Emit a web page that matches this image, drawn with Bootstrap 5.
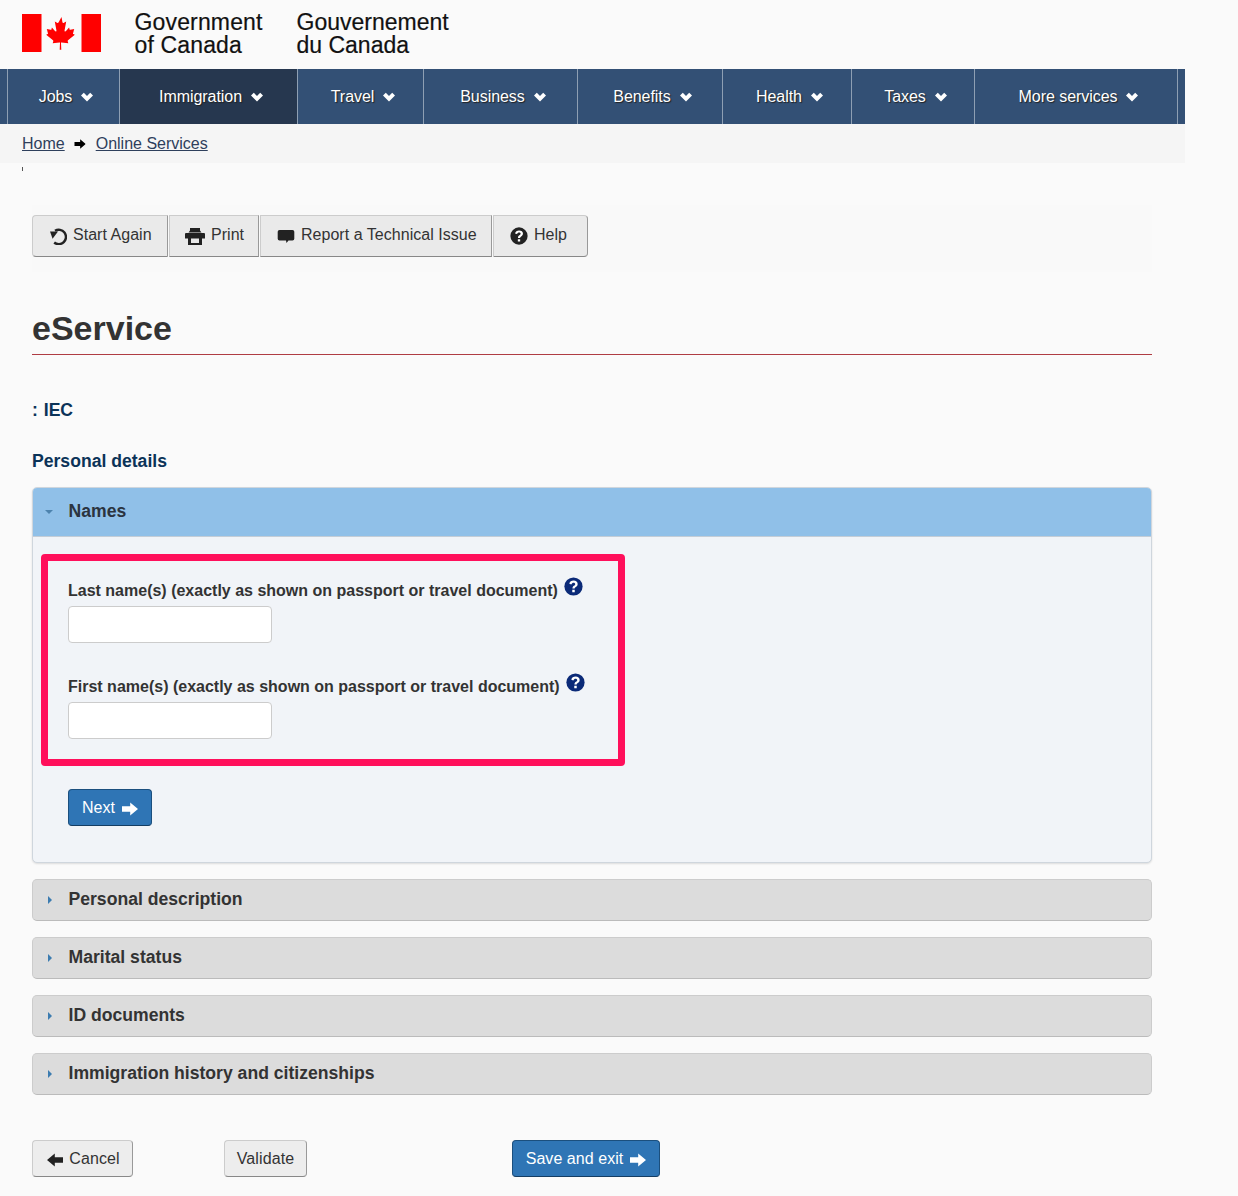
<!DOCTYPE html>
<html lang="en"><head><meta charset="utf-8"><title>eService</title>
<link href="https://cdn.jsdelivr.net/npm/bootstrap@5.3.0/dist/css/bootstrap.min.css" rel="stylesheet">
<style>
html,body{background:#fafafa}
body{font-family:"Liberation Sans",Arial,sans-serif;color:#333;font-size:16px;height:1196px;overflow:hidden}
.gc-head{height:69px;padding:14px 0 0 22px}
.gc-flag{width:79px;height:38px;display:block}
.gc-names{margin-left:33.500px;margin-top:-3px;color:#111;font-size:23px;line-height:23px;gap:33px;-webkit-text-stroke:.2px #111}
.gc-names div{white-space:pre-line;width:129px}
.gc-names .en-name{letter-spacing:.15px}
.gc-nav{width:1185px;height:55px;background:#335075;padding-left:7px}
.gc-nav a{display:flex;align-items:center;justify-content:center;gap:9px;padding-left:5px;color:#fff;text-decoration:none;height:55px;border-left:1px solid #8e9fb3;font-size:16px;letter-spacing:-.05px;text-shadow:1px 1px 1px #222}
.gc-nav a.on{background:#26374f}
.gc-nav .endcap{border-left:1px solid #8e9fb3;width:8px;flex:none}
.gc-nav svg{width:12px;height:12px;fill:#fff}
.gc-crumb{width:1185px;height:39px;background:#f5f5f5;padding-left:22px;font-size:16px;gap:9px}
.gc-crumb a{color:#2e3f5c}
.gc-crumb svg{margin-right:1px}
.tick{margin:4px 0 0 22px;width:1px;height:4px;background:#555}
.page-wrap{width:1120px;margin-left:32px}
.tool-strip{background:#f9f9f9;margin-top:34px;height:67px;padding-top:10px;gap:1px}
.tool-btn{height:42px;display:flex;align-items:center;justify-content:flex-start;gap:6px;background:#eaeaea;border:1px solid #ccc;border-bottom-color:#888;border-right-color:#999;color:#333;font-size:16px;padding:0 0 2px 16px;border-radius:0;letter-spacing:.03px;white-space:nowrap}
.tool-btn.first{border-radius:4px 0 0 4px}.tool-btn.last{border-radius:0 4px 4px 0}
.tool-btn svg{width:18px;height:18px;fill:#222;flex:none;position:relative;top:1px}
.tool-btn svg.ico-print{width:20px;height:18px;margin:0 0 0 -1px;top:2px}
.w-start{width:136px}.w-print{width:90px}.w-report{width:232px}.w-help{width:95px}
.svc-title{font-size:34px;font-weight:700;color:#333;margin:0;line-height:38px;padding:37px 0 7px;border-bottom:1px solid #af3c43}
.sub-head{font-size:17.600px;font-weight:700;color:#0b3358;line-height:22px}
.iec-line{margin-top:44px;word-spacing:1px}
.pd-line{margin-top:29px}
.acc-open{margin-top:15px;border:1px solid #cfd6dd;border-radius:5px;background:#f1f4f8;height:376px;box-shadow:0 1px 2px rgba(0,0,0,.12)}
.acc-top{height:49px;padding-bottom:2px;background:#90c0e8;border-radius:4px 4px 0 0;border-bottom:1px solid #c3cdd7;font-size:17.600px;font-weight:700;color:#2b3440}
.acc-closed{margin-top:16px;height:42px;padding-bottom:2px;background:#dcdcdc;border:1px solid #ccc;border-bottom-color:#bbb;border-radius:5px;font-size:17.600px;font-weight:700;color:#333}
.caret-slot{width:35.500px;flex:none;padding-left:12px;display:flex}
.caret-d{width:0;height:0;margin-top:2px;border:4px solid transparent;border-top:4px solid #4d83ae;border-bottom:0}
.caret-r{width:0;height:0;margin:2px 0 0 3px;border:4px solid transparent;border-left:4px solid #3c7cb0;border-right:0}
.hi-box{margin:17px 0 0 8px;width:584px;height:212px;border:7px solid #ff0f5b;border-radius:4px;padding:17px 0 0 20px}
.fld-label{font-size:16px;font-weight:700;color:#333;line-height:22px;gap:6px;height:28px;padding-bottom:2px;white-space:nowrap}
.fld-label svg{width:19px;height:19px;margin-top:-10px;flex:none;fill:#0b2a78}
.fld-input{display:block;width:204px;height:37px;border:1px solid #ccc;border-radius:4px;background:#fff;padding:0 8px;margin-bottom:31px}
.next-btn{margin:23px 0 0 35px;width:84px;height:37px;padding:0;display:flex;align-items:center;justify-content:center;gap:7px;background:#2f75b5;border:1px solid #1b4f7e;border-bottom-color:#143d63;border-radius:4px;color:#fff;font-size:16px}
.next-btn svg,.save-btn svg{width:16px;height:14px;fill:#fff;position:relative;top:1px}
.act-row{margin-top:45px;height:37px}
.plain-btn{height:37px;padding:0;display:flex;align-items:center;justify-content:center;gap:6px;background:#ededed;border:1px solid #ccc;border-bottom-color:#888;border-right-color:#999;border-radius:4px;color:#333;font-size:16px;letter-spacing:.1px}
.plain-btn svg{width:16px;height:14px;fill:#222;position:relative;top:1px}
.w-cancel{width:101px;padding-left:2px}.w-valid{width:83px;margin-left:91px}
.save-btn{height:37px;width:148px;margin-left:205px;padding:0;display:flex;align-items:center;justify-content:center;gap:7px;background:#2f75b5;border:1px solid #1b4f7e;border-bottom-color:#143d63;border-radius:4px;color:#fff;font-size:16px;letter-spacing:.05px}
.n1{width:112px}.n2{width:178px}.n3{width:126px}.n4{width:154px}.n5{width:145px}.n6{width:129px}.n7{width:123px}.n8{width:203px}
</style></head><body>
<svg width="0" height="0" class="d-block position-absolute"><defs>
<symbol id="chev" viewBox="0 0 12 12"><path d="M0 4.500 2.800 1.800 6 5l3.200-3.200L12 4.500 6 10.500z"/></symbol>
<symbol id="arr" viewBox="0 0 16 14"><path d="M0 4.200h8.200V.5L16 7l-7.800 6.500V9.800H0z"/></symbol>
<symbol id="arl" viewBox="0 0 16 14"><path d="M16 4.200H7.800V.5L0 7l7.800 6.500V9.800H16z"/></symbol>
<symbol id="qm" viewBox="0 0 20 20"><circle cx="10" cy="10" r="9.600"/><path fill="#fff" d="M7.700 7.900 5.600 7.200C6 5 7.800 3.800 10.100 3.800c2.500 0 4.300 1.400 4.300 3.500 0 1.700-1 2.500-2 3.200-.8.500-1.200.9-1.200 1.700H8.900c-.1-1.500.5-2.300 1.500-3 .8-.5 1.400-.9 1.400-1.700 0-.8-.7-1.400-1.700-1.400-1.100 0-1.800.6-2.400 1.800zM8.700 13.500h2.600v2.500H8.700z"/></symbol>
</defs></svg>
<header class="gc-head d-flex">
<svg class="gc-flag" viewBox="0 0 79 38"><path fill="#f00" d="M0 0h19.500v38H0zM59.500 0H79v38H59.500z"/><path fill="#f00" d="M39.500 3l-3 5.500c-.4.600-1 .5-1.500.2l-2.200-1.100 1.600 8.600c.3 1.500-.8 1.600-1.400.9l-3.100-3.500-.5 1.800c-.1.300-.3.500-.7.400l-3.900-.8 1 3.700c.2.800.4 1.200-.2 1.400l-1.400.7 6.800 5.500c.3.200.4.600.3.900l-.6 2 6.800-.8c.2 0 .5.200.5.400l-.3 7h1.600l-.3-7c0-.2.300-.4.500-.4l6.800.8-.6-2c-.1-.3 0-.7.300-.9l6.800-5.500-1.400-.7c-.6-.2-.4-.6-.2-1.400l1-3.700-3.900.8c-.4.100-.6-.1-.7-.4l-.5-1.800-3.100 3.500c-.6.700-1.700.6-1.400-.9l1.600-8.600-2.200 1.100c-.5.300-1.100.4-1.500-.2z"/></svg>
<div class="gc-names d-flex"><div class="en-name">Government
of Canada</div><div>Gouvernement
du Canada</div></div>
</header>
<nav class="gc-nav d-flex">
<a href="#" class="n1">Jobs <svg><use href="#chev"/></svg></a>
<a href="#" class="n2 on">Immigration <svg><use href="#chev"/></svg></a>
<a href="#" class="n3">Travel <svg><use href="#chev"/></svg></a>
<a href="#" class="n4">Business <svg><use href="#chev"/></svg></a>
<a href="#" class="n5">Benefits <svg><use href="#chev"/></svg></a>
<a href="#" class="n6">Health <svg><use href="#chev"/></svg></a>
<a href="#" class="n7">Taxes <svg><use href="#chev"/></svg></a>
<a href="#" class="n8">More services <svg><use href="#chev"/></svg></a>
<span class="endcap"></span>
</nav>
<div class="gc-crumb d-flex align-items-center"><a href="#">Home</a><svg width="12" height="10" viewBox="0 0 16 14"><use href="#arr"/></svg><a href="#">Online Services</a></div>
<div class="tick"></div>
<main class="page-wrap">
<div class="tool-strip d-flex">
<button class="tool-btn first w-start"><svg viewBox="0 0 18 18"><path fill="none" stroke="#222" stroke-width="2.400" d="M6 3.800a7.200 7.200 0 1 1-.8 11.700"/><path d="M1 4.500h8L3.600 11.800z"/></svg>Start Again</button>
<button class="tool-btn w-print"><svg class="ico-print" viewBox="0 0 20 18"><path d="M5 0h10v2.500L16.500 4.500h-13L5 2.500z"/><path fill-rule="evenodd" d="M1 5h18a1 1 0 0 1 1 1v4.500H17V17H3V10.500H0V6a1 1 0 0 1 1-1zM6 10.500V15h8v-4.500z"/></svg>Print</button>
<button class="tool-btn w-report"><svg viewBox="0 0 18 18"><path d="M2.500 3h13a1.800 1.800 0 0 1 1.800 1.800v7a1.800 1.800 0 0 1-1.800 1.800h-4l-2 2.400-.5-2.400H2.500a1.800 1.800 0 0 1-1.800-1.800v-7A1.800 1.800 0 0 1 2.500 3z"/></svg>Report a Technical Issue</button>
<button class="tool-btn last w-help"><svg><use href="#qm"/></svg>Help</button>
</div>
<h1 class="svc-title">eService</h1>
<div class="sub-head iec-line">: IEC</div>
<div class="sub-head pd-line">Personal details</div>
<section class="acc-open">
<div class="acc-top d-flex align-items-center"><span class="caret-slot"><i class="caret-d"></i></span>Names</div>
<div class="hi-box">
<div class="fld-label d-flex align-items-center">Last name(s) (exactly as shown on passport or travel document) <svg><use href="#qm"/></svg></div>
<input class="fld-input" type="text" aria-label="Last name">
<div class="fld-label d-flex align-items-center">First name(s) (exactly as shown on passport or travel document) <svg><use href="#qm"/></svg></div>
<input class="fld-input" type="text" aria-label="First name">
</div>
<button class="next-btn">Next <svg><use href="#arr"/></svg></button>
</section>
<div class="acc-closed d-flex align-items-center"><span class="caret-slot"><i class="caret-r"></i></span>Personal description</div>
<div class="acc-closed d-flex align-items-center"><span class="caret-slot"><i class="caret-r"></i></span>Marital status</div>
<div class="acc-closed d-flex align-items-center"><span class="caret-slot"><i class="caret-r"></i></span>ID documents</div>
<div class="acc-closed d-flex align-items-center"><span class="caret-slot"><i class="caret-r"></i></span>Immigration history and citizenships</div>
<div class="act-row d-flex">
<button class="plain-btn w-cancel"><svg><use href="#arl"/></svg>Cancel</button>
<button class="plain-btn w-valid">Validate</button>
<button class="save-btn">Save and exit <svg><use href="#arr"/></svg></button>
</div>
</main>
<script src="https://cdn.jsdelivr.net/npm/bootstrap@5.3.0/dist/js/bootstrap.bundle.min.js"></script>
</body></html>
